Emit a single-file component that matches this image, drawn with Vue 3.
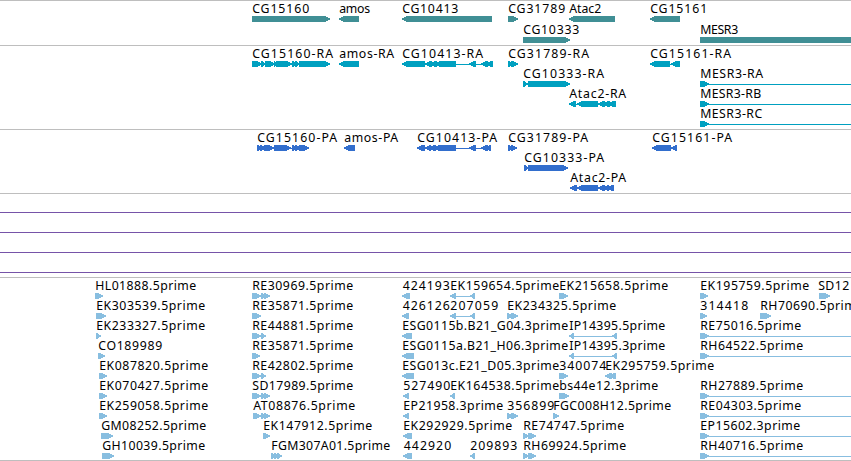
<template>
  <div class="browser">
    <section v-for="track in tracks" :key="track.name" class="track" :class="track.name">
      <svg v-if="track.features" class="canvas" width="851" :height="track.height - 1">
        <g
          v-for="(item, index) in track.features"
          :key="index"
          :transform="`translate(0 ${item.row * track.step})`"
        >
          <text :x="item.left + 0.2" y="12" :textLength="item.right - item.left">{{ item.label }}</text>
          <rect
            v-if="item.line"
            :x="item.line[0]"
            y="18"
            :width="item.line[1] - item.line[0]"
            height="1"
          />
          <polygon
            v-for="(part, i) in item.parts"
            :key="i"
            :points="arrow(part[0], part[1], item.dir)"
          />
        </g>
      </svg>
      <template v-else>
        <div v-for="n in 4" :key="n" class="rule"></div>
      </template>
    </section>
  </div>
</template>

<script setup>
// f(row, label, text left, text right, direction, parts, connecting line)
const f = (row, label, left, right, dir, parts, line) => ({
  row,
  label,
  left,
  right,
  dir,
  parts,
  line
});

const genes = [
  f(0, "CG15160", 252, 309, 1, [[252, 330]]),
  f(0, "amos", 339, 370, -1, [[339, 359]]),
  f(0, "CG10413", 402, 458, -1, [[402, 492]]),
  f(0, "CG31789", 508, 565, 1, [[508, 518]]),
  f(0, "Atac2", 569, 601, -1, [[569, 615]]),
  f(0, "CG15161", 650, 707, -1, [[650, 680]]),
  f(1, "CG10333", 523, 579, 1, [[523, 570]]),
  f(1, "MESR3", 700, 738, 1, [[700, 870]])
];

const transcripts = [
  f(0, "CG15160-RA", 252, 333, 1, [[252, 262], [261, 266], [265, 275], [274, 277], [276, 292], [292, 296], [295, 299], [299, 330]], [252, 330]),
  f(0, "amos-RA", 339, 394, -1, [[339, 359]]),
  f(0, "CG10413-RA", 402, 483, -1, [[402, 425], [425, 432], [430, 437], [435, 456], [469, 476], [481, 488], [486, 493]], [402, 493]),
  f(0, "CG31789-RA", 508, 589, 1, [[508, 513], [511, 518]]),
  f(0, "CG15161-RA", 650, 731, -1, [[650, 670], [671, 680]], [650, 680]),
  f(1, "CG10333-RA", 523, 604, 1, [[523, 528], [528, 570]]),
  f(2, "Atac2-RA", 569, 626, -1, [[569, 576], [577, 598], [598, 605], [603, 610], [608, 616]], [569, 616]),
  f(1, "MESR3-RA", 700, 763, 1, [[700, 709]], [700, 851]),
  f(2, "MESR3-RB", 700, 761, 1, [[700, 709]], [700, 851]),
  f(3, "MESR3-RC", 700, 762, 1, [[700, 709]], [700, 851])
];

const proteins = [
  f(0, "CG15160-PA", 257, 337, 1, [[257, 262], [260, 266], [264, 274], [274, 291], [292, 297], [295, 301], [299, 309]], [257, 309]),
  f(0, "amos-PA", 344, 398, -1, [[344, 355]]),
  f(0, "CG10413-PA", 417, 497, -1, [[417, 425], [425, 431], [429, 436], [434, 456], [469, 476], [481, 488], [486, 491]], [417, 491]),
  f(0, "CG31789-PA", 508, 588, 1, [[508, 513], [511, 517]]),
  f(0, "CG15161-PA", 652, 732, -1, [[652, 671], [671, 677]], [652, 677]),
  f(1, "CG10333-PA", 524, 604, 1, [[524, 529], [528, 568]]),
  f(2, "Atac2-PA", 570, 626, -1, [[570, 577], [577, 598], [598, 605], [603, 609], [607, 614]], [570, 614])
];

const ests = [
  f(0, "HL01888.5prime", 95, 196, 1, [[95, 103]]),
  f(1, "EK303539.5prime", 96, 205, 1, [[96, 106]]),
  f(2, "EK233327.5prime", 96, 205, 1, [[96, 101]]),
  f(3, "CO189989", 98, 162, 1, [[98, 105]]),
  f(4, "EK087820.5prime", 99, 208, 1, [[99, 107]]),
  f(5, "EK070427.5prime", 99, 208, 1, [[99, 107]]),
  f(6, "EK259058.5prime", 99, 208, 1, [[99, 107]]),
  f(7, "GM08252.5prime", 101, 206, 1, [[101, 113]]),
  f(8, "GH10039.5prime", 102, 205, 1, [[102, 114]]),

  f(0, "RE30969.5prime", 252, 353, 1, [[252, 261], [261, 266], [264, 270]], [252, 270]),
  f(1, "RE35871.5prime", 252, 353, 1, [[252, 261]]),
  f(2, "RE44881.5prime", 252, 353, 1, [[252, 261], [261, 266]], [252, 266]),
  f(3, "RE35871.5prime", 252, 353, 1, [[252, 260]]),
  f(4, "RE42802.5prime", 252, 353, 1, [[252, 261], [261, 266]], [252, 266]),
  f(5, "SD17989.5prime", 252, 353, 1, [[252, 261], [261, 266], [264, 270]], [252, 270]),
  f(6, "AT08876.5prime", 253, 355, 1, [[253, 261], [261, 266], [264, 270]], [253, 270]),
  f(7, "EK147912.5prime", 263, 372, 1, [[263, 270]]),
  f(8, "FGM307A01.5prime", 271, 390, 1, [[271, 276], [274, 279], [277, 282]]),

  f(0, "424193", 402.5, 449.5, -1, [[402, 410]]),
  f(1, "426126", 402.5, 449.5, -1, [[402, 409]]),
  f(2, "ESG0115b.B21_G04.3prime", 402, 568, -1, [[402, 412]]),
  f(3, "ESG0115a.B21_H06.3prime", 402, 568, -1, [[402, 414]]),
  f(4, "ESG013c.E21_D05.3prime", 402, 559, -1, [[402, 414]]),
  f(5, "527490", 403, 450, -1, [[403, 409]]),
  f(6, "EP21958.3prime", 403, 503, -1, [[403, 409]]),
  f(7, "EK292929.5prime", 403, 512, -1, [[403, 412]]),
  f(8, "442920", 403.5, 451, -1, [[403, 412]]),
  f(0, "EK159654.5prime", 450, 559, -1, [[450, 456], [470, 475]], [450, 475]),
  f(1, "207059", 450, 498, -1, [[450, 456], [470, 475]], [450, 475]),
  f(5, "EK164538.5prime", 450, 559, -1, [[450, 455]]),
  f(8, "209893", 470, 517, -1, [[470, 475]]),

  f(1, "EK234325.5prime", 507, 616, 1, [[507, 513], [511, 518]]),
  f(6, "356899", 507, 554, 1, [[507, 513], [511, 518]]),
  f(7, "RE74747.5prime", 523, 624, 1, [[523, 529], [528, 536]]),
  f(8, "RH69924.5prime", 523, 626, 1, [[523, 529], [528, 536]]),
  f(6, "FGC008H12.5prime", 553, 671, 1, [[553, 559]]),
  f(0, "EK215658.5prime", 559, 668, 1, [[559, 568]]),
  f(4, "340074", 559, 606, 1, [[559, 568]]),
  f(5, "bs44e12.3prime", 559, 658, 1, [[559, 569]]),
  f(2, "IP14395.5prime", 569, 665, -1, [[569, 574], [612, 617]], [569, 617]),
  f(3, "IP14395.3prime", 569, 665, -1, [[569, 574], [612, 617]], [569, 617]),
  f(4, "EK295759.5prime", 605, 714, -1, [[605, 612], [609, 616]]),

  f(0, "EK195759.5prime", 700, 809, 1, [[700, 708]]),
  f(1, "314418", 700, 748, 1, [[700, 707]]),
  f(2, "RE75016.5prime", 700, 801, 1, [[700, 709]], [700, 851]),
  f(3, "RH64522.5prime", 700, 803, 1, [[700, 709]], [700, 851]),
  f(5, "RH27889.5prime", 700, 803, 1, [[700, 709]], [700, 851]),
  f(6, "RE04303.5prime", 700, 801, 1, [[700, 709]], [700, 851]),
  f(7, "EP15602.3prime", 700, 800, 1, [[700, 709]], [700, 851]),
  f(8, "RH40716.5prime", 700, 803, 1, [[700, 709]], [700, 851]),
  f(1, "RH70690.5prime", 760, 863, 1, [[760, 771]]),
  f(0, "SD12", 818, 849, 1, [[819, 830]])
];

const tracks = [
  { name: "genes", height: 45, step: 21, features: genes },
  { name: "transcripts", height: 84, step: 20, features: transcripts },
  { name: "proteins", height: 64, step: 20, features: proteins },
  { name: "inserts", height: 84 },
  { name: "ests", height: 183, step: 20, features: ests }
];

// Six pixel high bar with a pointed end in the strand direction
const arrow = (start, end, dir) => {
  const head = Math.min(6, end - start);
  if (dir > 0) {
    const neck = end - head;
    return `${start},15 ${neck + 1},15 ${end},17.6 ${end},18.4 ${neck + 1},21 ${start},21`;
  }
  const neck = start + head;
  return `${end},15 ${neck - 1},15 ${start},17.6 ${start},18.4 ${neck - 1},21 ${end},21`;
};
</script>

<style>
body {
  margin: 0;
  background: #fff;
}
</style>

<style scoped>
.browser {
  width: 851px;
  height: 461px;
  box-sizing: border-box;
  overflow: hidden;
  border-bottom: 1px solid #bebebe;
}

.track {
  box-sizing: border-box;
  border-top: 1px solid #bebebe;
}

.canvas {
  display: block;
  overflow: hidden;
}

.canvas text {
  font-family: "Noto Sans", "Open Sans", sans-serif;
  font-size: 12.3px;
  fill: #000;
}

.canvas rect,
.canvas polygon {
  shape-rendering: crispEdges;
}

.genes {
  height: 45px;
  fill: #408f95;
}

.transcripts {
  height: 84px;
  fill: #00a0c0;
}

.proteins {
  height: 64px;
  fill: #326ecd;
}

.inserts {
  display: flex;
  flex-direction: column;
  gap: 19px;
  height: 84px;
  padding-top: 18px;
}

.rule {
  height: 1px;
  background: #7654a8;
}

.ests {
  height: 183px;
  fill: #88bee0;
}
</style>
